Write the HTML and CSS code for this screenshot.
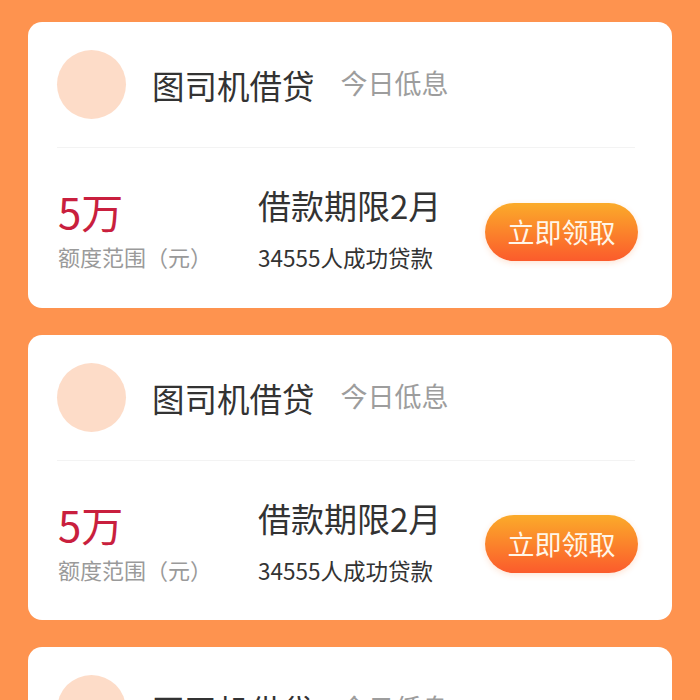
FILE: index.html
```html
<!DOCTYPE html>
<html lang="zh-CN">
<head>
  <meta charset="UTF-8">
  <title>贷款列表</title>
  <link rel="stylesheet" href="styles.css">
</head>
<body>
<div class="list">
  <div class="card">
    <div class="card-head">
      <span class="logo"></span>
      <span class="name">图司机借贷</span>
      <span class="tag">今日低息</span>
    </div>
    <div class="card-body">
      <div class="amount">
        <p class="amount-num">5万</p>
        <p class="amount-label">额度范围（元）</p>
      </div>
      <div class="info">
        <p class="info-term">借款期限2月</p>
        <p class="info-count">34555人成功贷款</p>
      </div>
      <a class="btn" href="#">立即领取</a>
    </div>
  </div>

  <div class="card">
    <div class="card-head">
      <span class="logo"></span>
      <span class="name">图司机借贷</span>
      <span class="tag">今日低息</span>
    </div>
    <div class="card-body">
      <div class="amount">
        <p class="amount-num">5万</p>
        <p class="amount-label">额度范围（元）</p>
      </div>
      <div class="info">
        <p class="info-term">借款期限2月</p>
        <p class="info-count">34555人成功贷款</p>
      </div>
      <a class="btn" href="#">立即领取</a>
    </div>
  </div>

  <div class="card">
    <div class="card-head">
      <span class="logo"></span>
      <span class="name">图司机借贷</span>
      <span class="tag">今日低息</span>
    </div>
    <div class="card-body">
      <div class="amount">
        <p class="amount-num">5万</p>
        <p class="amount-label">额度范围（元）</p>
      </div>
      <div class="info">
        <p class="info-term">借款期限2月</p>
        <p class="info-count">34555人成功贷款</p>
      </div>
      <a class="btn" href="#">立即领取</a>
    </div>
  </div>
</div>
</body>
</html>
```

FILE: styles.css
```css
* {
  margin: 0;
  padding: 0;
  box-sizing: border-box;
}

body {
  background-color: #fe934f;
  font-family: "Noto Sans CJK SC", "Noto Sans", sans-serif;
}

.list {
  display: flex;
  flex-direction: column;
  gap: 27px;
  padding: 22px 28px;
}

.card {
  background-color: #fff;
  border-radius: 14px;
  padding: 0 34px 0 29px;
}

/* 头部 */
.card-head {
  display: flex;
  align-items: center;
  padding: 28px 0 28px;
  border-bottom: 1px solid #f3f3f3;
  margin-right: 3px;
}

.logo {
  width: 69px;
  height: 69px;
  border-radius: 50%;
  background-color: #fddcc8;
  margin-right: 26px;
}

.name {
  font-size: 32.5px;
  line-height: 1;
  color: #333;
  margin-top: 2px;
}

.tag {
  font-size: 27px;
  line-height: 1;
  color: #9d9d9d;
  margin-left: 26px;
  margin-top: -4px;
}

/* 内容 */
.card-body {
  display: grid;
  grid-template-columns: 200px 1fr auto;
  align-items: center;
  padding: 41px 0 39px 1px;
}

.amount-num {
  font-size: 42px;
  line-height: 1;
  color: #c91f3e;
}

.amount-label {
  font-size: 22px;
  line-height: 1;
  color: #9a9a9a;
  margin-top: 13px;
}

.info-term {
  font-size: 33px;
  line-height: 1;
  color: #333;
}

.info-count {
  font-size: 22.5px;
  line-height: 1;
  color: #333;
  margin-top: 24px;
}

.btn {
  display: block;
  width: 153px;
  height: 58px;
  margin-top: 6px;
  border-radius: 29px;
  background: linear-gradient(to bottom, #fbab2a, #fb5b2c);
  box-shadow: 0 2px 6px rgba(250, 120, 40, 0.2);
  color: #fff6e8;
  font-size: 27px;
  line-height: 58px;
  text-align: center;
  text-decoration: none;
}
```
